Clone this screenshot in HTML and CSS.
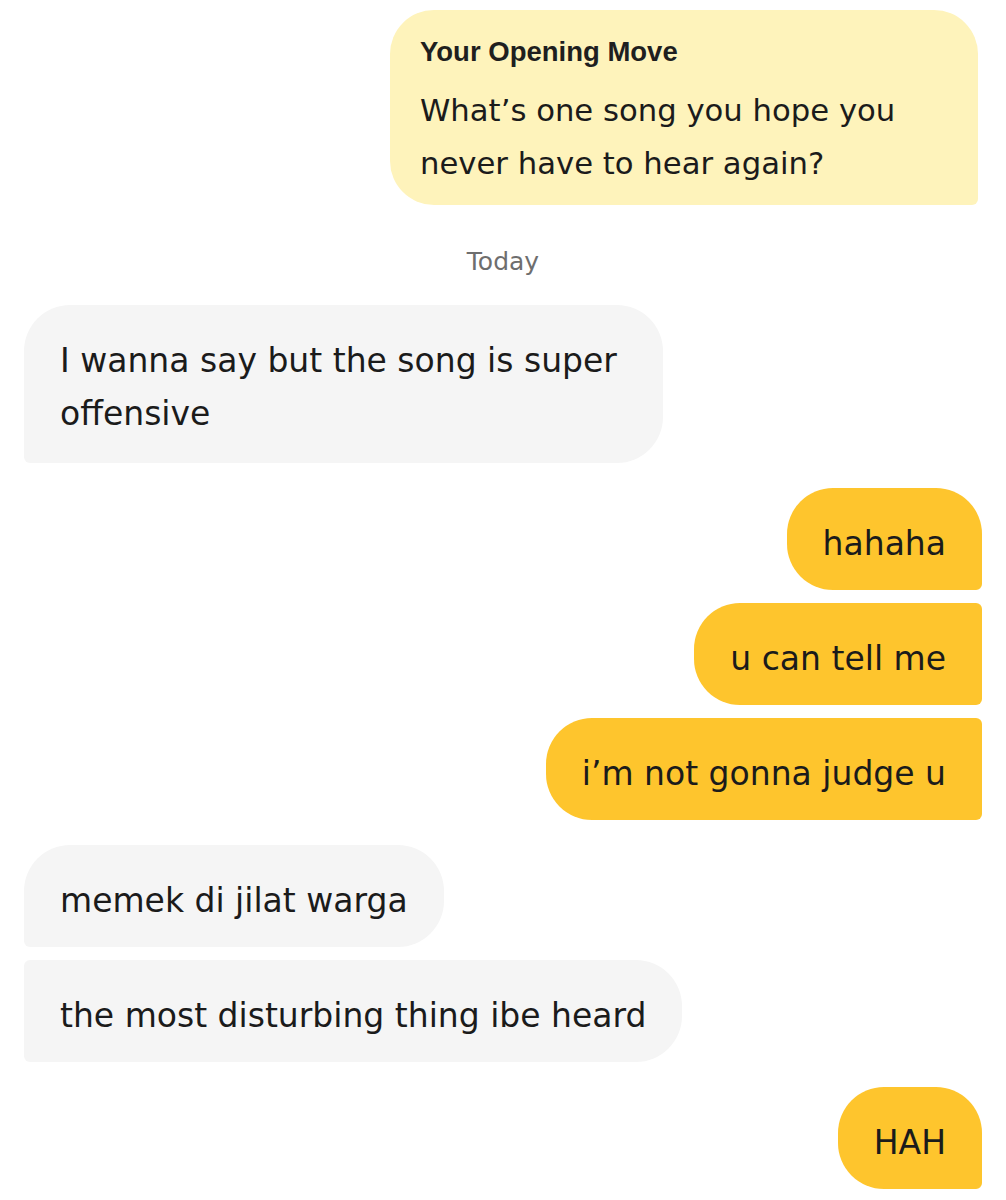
FILE: index.html
```html
<!DOCTYPE html>
<html>
<head>
<meta charset="utf-8">
<link rel="stylesheet" href="styles.css">
</head>
<body>
<div class="chat">
  <div class="opening">
    <div class="opening-title">Your Opening Move</div>
    <div class="opening-text">What’s one song you hope you<br>never have to hear again?</div>
  </div>
  <div class="day">Today</div>

  <div class="group in">
    <div class="bubble in first last">I wanna say but the song is super<br>offensive</div>
  </div>

  <div class="group out">
    <div class="bubble out first">hahaha</div>
    <div class="bubble out mid">u can tell me</div>
    <div class="bubble out mid">i’m not gonna judge u</div>
  </div>

  <div class="group in">
    <div class="bubble in first">memek di jilat warga</div>
    <div class="bubble in end">the most disturbing thing ibe heard</div>
  </div>

  <div class="group out">
    <div class="bubble out first">HAH</div>
  </div>
</div>
</body>
</html>
```

FILE: styles.css
```css
html, body {
  margin: 0;
  padding: 0;
  background: #ffffff;
}

.chat {
  display: flex;
  flex-direction: column;
  padding: 10px 24px 0 24px;
  font-family: "DejaVu Sans", sans-serif;
  color: #1b1b1b;
}

.opening {
  align-self: flex-end;
  margin-right: 4px;
  width: 588px;
  box-sizing: border-box;
  height: 195px;
  padding: 22px 30px 0 30px;
  background: #fef3bb;
  border-radius: 44px 44px 6px 44px;
}

.opening-title {
  font-family: "Liberation Sans", sans-serif;
  font-weight: bold;
  font-size: 27.5px;
  line-height: 40px;
  color: #1f1f1f;
}

.opening-text {
  font-size: 30.7px;
  line-height: 53px;
  margin-top: 12px;
}

.day {
  align-self: center;
  margin-top: 42px;
  font-size: 25px;
  line-height: 30px;
  color: #6e6e6e;
}

.group {
  display: flex;
  flex-direction: column;
  gap: 13px;
  margin-top: 25px;
}

.day + .group {
  margin-top: 28px;
}

.group.in {
  align-items: flex-start;
}

.group.out {
  align-items: flex-end;
}

.bubble {
  font-size: 33px;
  line-height: 53px;
  padding: 29px 36px 20px 36px;
  white-space: nowrap;
}

.bubble.in {
  background: #f5f5f5;
  border-radius: 46px 46px 46px 6px;
}

.bubble.in.last {
  padding: 29px 46px 23px 36px;
}

.bubble.in.end {
  border-radius: 6px 46px 46px 6px;
}

.bubble.out {
  background: #fec52d;
  border-radius: 46px 46px 6px 46px;
}

.bubble.out.mid {
  border-radius: 46px 6px 6px 46px;
}
```
